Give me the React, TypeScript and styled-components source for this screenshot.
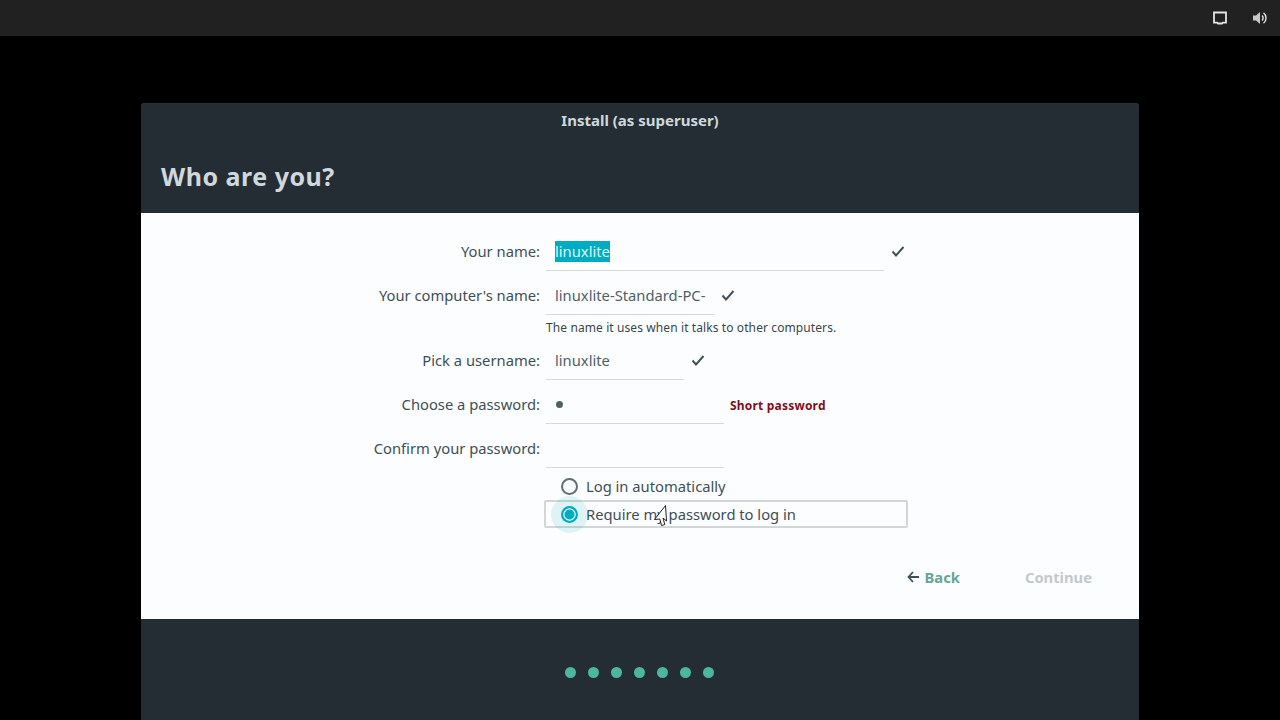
import React from "react";
import styled, { createGlobalStyle } from "styled-components";

const GlobalStyle = createGlobalStyle`
  html, body {
    margin: 0;
    height: 100%;
    background: #000;
    overflow: hidden;
  }
  body {
    font-family: "Noto Sans", "Open Sans", sans-serif;
  }
`;

const Screen = styled.div`
  width: 1280px;
  height: 720px;
  display: flex;
  flex-direction: column;
  align-items: center;
  background: #000;
`;

const TopBar = styled.div`
  width: 100%;
  height: 36px;
  flex: none;
  background: #212121;
  display: flex;
  align-items: center;
  justify-content: flex-end;
  gap: 24px;
  padding-right: 12px;
  box-sizing: border-box;
  color: #e4e4e4;
`;

const TrayIcon = styled.svg`
  width: 16px;
  height: 16px;
  display: block;
`;

const Window = styled.div`
  width: 998px;
  margin-top: 67px;
  flex: 1;
  display: flex;
  flex-direction: column;
`;

const Header = styled.div`
  height: 110px;
  flex: none;
  background: #242d33;
  border-radius: 2px 2px 0 0;
  display: flex;
  flex-direction: column;
`;

const WindowTitle = styled.div`
  height: 35px;
  line-height: 35px;
  text-align: center;
  font-size: 15px;
  font-weight: 700;
  color: #cfd8dc;
`;

const PageTitle = styled.h1`
  margin: 0;
  padding: 20px 0 0 20px;
  font-size: 25px;
  line-height: 36px;
  font-weight: 700;
  letter-spacing: 0.5px;
  color: #cfd8dc;
`;

const Body = styled.div`
  height: 406px;
  flex: none;
  background: #fcfdfe;
  position: relative;
  padding-top: 16px;
  box-sizing: border-box;
  display: flex;
  flex-direction: column;
`;

const Row = styled.div<{ $height?: number; $top?: number }>`
  display: flex;
  align-items: center;
  height: ${(p) => p.$height ?? 44}px;
  margin-top: ${(p) => p.$top ?? 0}px;
`;

const Label = styled.label`
  width: 399px;
  flex: none;
  text-align: right;
  font-size: 14.75px;
  color: #3f4f57;
`;

const Entry = styled.div<{ $width: number }>`
  width: ${(p) => p.$width}px;
  height: 40px;
  margin-left: 6px;
  flex: none;
  box-sizing: border-box;
  border-bottom: 1px solid #d5d9db;
  padding: 0 0 0 9px;
  display: flex;
  align-items: center;
  font-size: 14.75px;
  color: #505f67;
  white-space: nowrap;
`;

const Selected = styled.span`
  margin-top: 2px;
  background: #00acc1;
  color: #dff6f9;
  line-height: 21px;
`;

const Check = styled.svg`
  width: 16px;
  height: 16px;
  margin-left: 6px;
  flex: none;
  color: #3f4f57;
`;

const Hint = styled.div`
  height: 21px;
  line-height: 21px;
  padding-left: 405px;
  font-size: 12px;
  letter-spacing: 0.1px;
  color: #3a464c;
`;

const PasswordDot = styled.span`
  width: 7px;
  height: 7px;
  margin: 2px 0 0 1px;
  border-radius: 50%;
  background: #505f67;
`;

const Warning = styled.span`
  margin-left: 6px;
  padding-top: 2px;
  font-size: 12px;
  font-weight: 700;
  letter-spacing: 0.2px;
  color: #7f0e1e;
`;

const RadioRow = styled.div<{ $focused?: boolean }>`
  width: 364px;
  height: 28px;
  margin-left: 403px;
  box-sizing: border-box;
  display: flex;
  align-items: center;
  gap: 8px;
  padding-left: 15px;
  font-size: 14.75px;
  color: #3f4f57;
  border: 2px solid ${(p) => (p.$focused ? "#d3d6d7" : "transparent")};
  border-radius: 2px;
`;

const RadioMark = styled.span<{ $checked?: boolean }>`
  width: 17px;
  height: 17px;
  flex: none;
  box-sizing: border-box;
  border-radius: 50%;
  border: 2px solid ${(p) => (p.$checked ? "#00acc1" : "#5f6f77")};
  background: ${(p) => (p.$checked ? "#00acc1" : "transparent")};
  box-shadow: ${(p) =>
    p.$checked
      ? "inset 0 0 0 1.5px #d9f2f5, 0 0 0 10px rgba(0, 172, 193, 0.12)"
      : "none"};
`;

const Actions = styled.div`
  display: flex;
  justify-content: flex-end;
  align-items: center;
  gap: 65px;
  height: 30px;
  margin-top: 34px;
  padding-right: 47px;
`;

const ActionButton = styled.button<{ $disabled?: boolean }>`
  border: 0;
  padding: 0;
  background: none;
  display: flex;
  align-items: center;
  gap: 5px;
  font-family: inherit;
  font-size: 14.75px;
  font-weight: 700;
  color: ${(p) => (p.$disabled ? "#c2c9cc" : "#67a596")};
`;

const BackArrow = styled.svg`
  width: 14px;
  height: 14px;
  color: #3f4f57;
`;

const Cursor = styled.svg`
  position: absolute;
  left: 511px;
  top: 291px;
  width: 16px;
  height: 22px;
`;

const Footer = styled.div`
  flex: 1;
  background: #242d33;
  display: flex;
  justify-content: center;
  gap: 12px;
  padding: 48px 2px 0 0;
  box-sizing: border-box;
`;

const Dot = styled.span`
  width: 11px;
  height: 11px;
  border-radius: 50%;
  background: #4db6a0;
`;

const CheckIcon = () => (
  <Check viewBox="0 0 16 16" fill="none">
    <path d="M2.5 8.5 6 12.5 13.5 4" stroke="currentColor" strokeWidth="1.9" />
  </Check>
);

export default function App() {
  return (
    <Screen>
      <GlobalStyle />
      <TopBar>
        <TrayIcon viewBox="0 0 16 16" fill="none">
          <path
            d="M2 2.5h12v10.2h-3.2l-.8.8H6l-.8-.8H2z"
            stroke="currentColor"
            strokeWidth="1.8"
          />
        </TrayIcon>
        <TrayIcon viewBox="0 0 16 16" fill="none">
          <path d="M1 5.5h3L8 2v12l-4-3.5H1z" fill="currentColor" opacity="0.85" />
          <path d="M10 5.5a3.4 3.4 0 0 1 0 5" stroke="currentColor" strokeWidth="1.4" />
          <path d="M11.5 2.8a6.6 6.6 0 0 1 0 10.4" stroke="currentColor" strokeWidth="1.4" />
        </TrayIcon>
      </TopBar>
      <Window>
        <Header>
          <WindowTitle>Install (as superuser)</WindowTitle>
          <PageTitle>Who are you?</PageTitle>
        </Header>
        <Body>
          <Row>
            <Label>Your name:</Label>
            <Entry $width={338}>
              <Selected>linuxlite</Selected>
            </Entry>
            <CheckIcon />
          </Row>
          <Row>
            <Label>Your computer's name:</Label>
            <Entry $width={168}>linuxlite-Standard-PC-</Entry>
            <CheckIcon />
          </Row>
          <Hint>The name it uses when it talks to other computers.</Hint>
          <Row>
            <Label>Pick a username:</Label>
            <Entry $width={138}>linuxlite</Entry>
            <CheckIcon />
          </Row>
          <Row>
            <Label>Choose a password:</Label>
            <Entry $width={178}>
              <PasswordDot />
            </Entry>
            <Warning>Short password</Warning>
          </Row>
          <Row>
            <Label>Confirm your password:</Label>
            <Entry $width={178} />
          </Row>
          <Row $height={28} $top={2}>
            <RadioRow>
              <RadioMark />
              Log in automatically
            </RadioRow>
          </Row>
          <Row $height={28}>
            <RadioRow $focused>
              <RadioMark $checked />
              Require my password to log in
            </RadioRow>
          </Row>
          <Actions>
            <ActionButton>
              <BackArrow viewBox="0 0 14 14" fill="none">
                <path d="M7 2 2.5 7 7 12M2.5 7H13" stroke="currentColor" strokeWidth="1.8" />
              </BackArrow>
              Back
            </ActionButton>
            <ActionButton $disabled>Continue</ActionButton>
          </Actions>
          <Cursor viewBox="0 0 16 22">
            <path
              d="M13.5 1.5 14.5 17 11 14 12.8 20.5 9.5 21.5 7.8 15 2.5 15.5z"
              fill="#fff"
              stroke="#222"
              strokeWidth="1"
              strokeLinejoin="round"
            />
          </Cursor>
        </Body>
        <Footer>
          {Array.from({ length: 7 }).map((_, i) => (
            <Dot key={i} />
          ))}
        </Footer>
      </Window>
    </Screen>
  );
}
